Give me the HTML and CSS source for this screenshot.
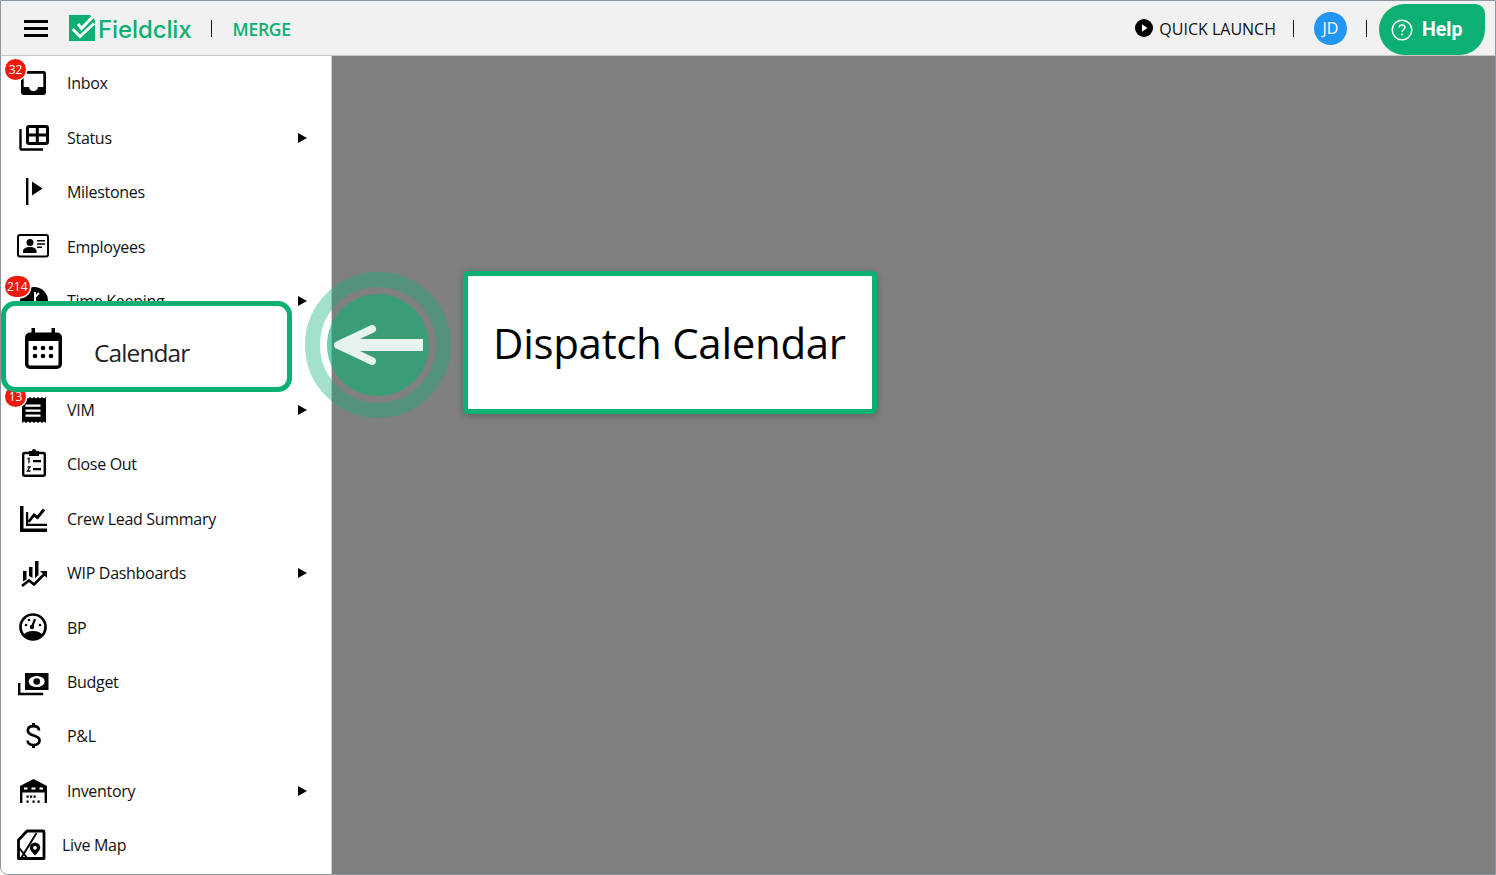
FILE: index.html
```html
<!DOCTYPE html>
<html lang="en">
<head>
<meta charset="utf-8">
<title>Fieldclix</title>
<link rel="stylesheet" href="styles.css">
</head>
<body>
<div class="app">
  <header class="topbar">
    <div class="burger"><span></span><span></span><span></span></div>
    <svg class="logo-mark" viewBox="0 0 26 26"><rect width="26" height="26" fill="#0db073"/><path d="M26 0L21 0 26 5z" fill="#f1f1f1"/><path d="M3.700 14l7.300 7.500L25 8.500" fill="none" stroke="#fff" stroke-width="3"/><path d="M9 9l3.500 4.500L24 1.500" fill="none" stroke="#fff" stroke-width="3"/></svg>
    <span class="brand">Fieldclix</span>
    <span class="sep sep-brand"></span>
    <span class="merge">MERGE</span>
    <div class="spacer"></div>
    <svg class="play" viewBox="0 0 18 18"><circle cx="9" cy="9" r="9" fill="#000"/><path d="M7 5.300L12.400 9 7 12.700z" fill="#fff"/></svg>
    <span class="quick">QUICK LAUNCH</span>
    <span class="sep sep-quick"></span>
    <span class="avatar">JD</span>
    <span class="sep sep-avatar"></span>
    <div class="help">
      <svg class="help-icon" viewBox="0 0 22 22"><circle cx="11" cy="11" r="9.800" fill="none" stroke="#fff" stroke-width="1.500"/><path d="M8.200 8.600c0-1.700 1.300-2.700 2.900-2.700 1.600 0 2.800 1 2.800 2.400 0 2.200-2.800 2.300-2.800 4.500" fill="none" stroke="#fff" stroke-width="1.500"/><circle cx="11.100" cy="15.600" r="1" fill="#fff"/></svg>
      <span>Help</span>
    </div>
  </header>
  <div class="content">
    <nav class="sidebar">
      <div class="nav-item">
        <span class="badge badge-inbox">32</span>
        <svg class="ico" viewBox="0 0 34 34"><path d="M27.500 5H7.500C6 5 5 6.200 5 7.700V26.300C5 27.800 6 29 7.500 29h20c1.500 0 2.500-1.200 2.500-2.700V7.700C30 6.200 29 5 27.500 5zM27.300 21h-5.300c0 2.300-2 4.100-4.500 4.100S13 23.300 13 21H7.700V7.800h19.600V21z"/></svg>
        <span class="label">Inbox</span>
      </div>
      <div class="nav-item">
        <svg class="ico" viewBox="0 0 34 34"><g fill="none" stroke="#000" stroke-width="3"><rect x="11.500" y="5.500" width="20" height="17" rx="1.500"/><path d="M21.300 5.500v17M11.500 14h20"/><path d="M4.500 8v19.500q0 1 1 1H27" stroke-width="2.400"/></g></svg>
        <span class="label">Status</span>
        <span class="caret"></span>
      </div>
      <div class="nav-item">
        <svg class="ico" viewBox="0 0 34 34"><rect x="10" y="3" width="2.400" height="27"/><path d="M16 6.500l10.500 7L16 20.500z"/></svg>
        <span class="label">Milestones</span>
      </div>
      <div class="nav-item">
        <svg class="ico" viewBox="0 0 34 34"><rect x="2" y="5" width="30" height="21.500" rx="2" fill="none" stroke="#000" stroke-width="2"/><circle cx="14" cy="12.500" r="3.500"/><path d="M7 23v-2c0-2.500 3.500-4 7-4s6.500 1.500 6.500 4v2z"/><path d="M21 10h8v1.500h-8zM21 13.300h8v1.500h-8zM21 16.600h5v1.500h-5z"/></svg>
        <span class="label">Employees</span>
      </div>
      <div class="nav-item">
        <span class="badge badge-time">214</span>
        <svg class="ico" viewBox="0 0 34 34"><circle cx="18" cy="17" r="14"/><path d="M19 8v9M19 13l4-4" fill="none" stroke="#fff" stroke-width="2"/></svg>
        <span class="label">Time Keeping</span>
        <span class="caret"></span>
      </div>
      <div class="nav-item"></div>
      <div class="nav-item">
        <span class="badge badge-vim">13</span>
        <svg class="ico" viewBox="0 0 34 34"><path d="M6 4l2 1.500L10 4l2 1.500L14 4l2 1.500L18 4l2 1.500L22 4l2 1.500L26 4l2 1.500L30 4v26l-2-1.500L26 30l-2-1.500L22 30l-2-1.500L18 30l-2-1.500L14 30l-2-1.500L10 30l-2-1.500L6 30z"/><path d="M9.500 11.500h15v2.200h-15zM9.500 16.500h15v2.200h-15zM9.500 21.500h15v2.200h-15z" fill="#fff"/></svg>
        <span class="label">VIM</span>
        <span class="caret"></span>
      </div>
      <div class="nav-item">
        <svg class="ico" viewBox="0 0 34 34"><rect x="7.200" y="6" width="21.600" height="22.800" rx="1.500" fill="none" stroke="#000" stroke-width="2.400"/><path d="M13 4h3a2 2 0 0 1 4 0h3v5H13z"/><path d="M11.500 12l1.500-.8v5M11.500 20h2.500l-2.500 4h3" fill="none" stroke="#000" stroke-width="1.300"/><path d="M17 13h8v2.200h-8zM17 21h8v2.200h-8z"/></svg>
        <span class="label">Close Out</span>
      </div>
      <div class="nav-item">
        <svg class="ico" viewBox="0 0 34 34"><path d="M4 4h3.500v22.500H31V30H4z"/><path d="M10 10h2.200v11.800H31V24H10z"/><path d="M12.500 20l5.500-7 3.500 2.500 6.500-8" fill="none" stroke="#000" stroke-width="2.800"/></svg>
        <span class="label">Crew Lead Summary</span>
      </div>
      <div class="nav-item">
        <svg class="ico" viewBox="0 0 34 34"><path d="M7 15h3.500v8.500l-3.500 2zM13 11h3.500v11L13 20zM19 5h3.500v14L19 22z"/><path d="M6 30l7-5.500 5 4 10.500-10.500" fill="none" stroke="#000" stroke-width="2.600"/><path d="M24 15h7v7z"/></svg>
        <span class="label">WIP Dashboards</span>
        <span class="caret"></span>
      </div>
      <div class="nav-item">
        <svg class="ico" viewBox="0 0 34 34"><circle cx="17" cy="16" r="12.500" fill="none" stroke="#000" stroke-width="2.700"/><path d="M7.500 24c1.500-2.500 5-4 9.500-4s8 1.500 9.500 4c-2.500 2.500-6 4-9.500 4s-7-1.500-9.500-4z"/><path d="M16 16l3-8" stroke="#000" stroke-width="2.200"/><circle cx="16" cy="16" r="2.200"/><circle cx="10" cy="14" r="1.300"/><circle cx="13" cy="9" r="1.300"/><circle cx="24" cy="14" r="1.300"/></svg>
        <span class="label">BP</span>
      </div>
      <div class="nav-item">
        <svg class="ico" viewBox="0 0 34 34"><rect x="9" y="8" width="23.500" height="17"/><ellipse cx="20.700" cy="16.500" rx="8" ry="5.500" fill="#fff"/><circle cx="20.700" cy="16.500" r="3.300"/><path d="M3.200 18v11h24" fill="none" stroke="#000" stroke-width="2.400"/></svg>
        <span class="label">Budget</span>
      </div>
      <div class="nav-item">
        <svg class="ico" viewBox="0 0 34 34"><path d="M23 11.500c0-3-2.500-4.300-5.500-4.300s-5.700 1.300-5.700 4.300c0 6.500 11.800 3.500 11.800 10 0 3-2.800 4.500-6 4.500s-6-1.500-6-4.500" fill="none" stroke="#000" stroke-width="2.700"/><path d="M16 4h3v4h-3zM16 25h3v4h-3z"/></svg>
        <span class="label">P&amp;L</span>
      </div>
      <div class="nav-item">
        <svg class="ico" viewBox="0 0 34 34"><path d="M4 29V12l13.500-7L31 12v17h-2.400V18.500H6.400V29z"/><path d="M8 13.500h3.500v2H8zM15.500 13.500h4v2h-4zM23.500 13.500h3.500v2h-3.500z" fill="#fff"/><path d="M10.500 21.500h2.200v2.200h-2.200zM14 21.500h2.200v2.200H14zM17.500 21.500h2.200v2.200h-2.200zM10.500 26.500h2.200v2.200h-2.200zM16.500 26.500h2.200v2.200h-2.200zM21.500 26.500h2.200v2.200h-2.200z"/></svg>
        <span class="label">Inventory</span>
        <span class="caret"></span>
      </div>
      <div class="nav-item nav-item-map">
        <svg class="ico" viewBox="0 0 34 34"><path d="M11 3h16a1 1 0 0 1 1 1v26.500H2.500V12z" fill="none" stroke="#000" stroke-width="2.800" stroke-linejoin="round"/><path d="M5.500 29.500L20.500 5M2 18.500l8.700 11" fill="none" stroke="#000" stroke-width="2"/><path d="M19 14.500a5.300 5.300 0 0 1 5.300 5.300c0 2.700-5.300 7.700-5.300 7.700s-5.300-5-5.300-7.700A5.300 5.300 0 0 1 19 14.500z"/><circle cx="19" cy="19.800" r="1.900" fill="#fff"/></svg>
        <span class="label">Live Map</span>
      </div>
    </nav>
    <main class="main"></main>
  </div>

  <div class="highlight">
    <svg class="highlight-icon" viewBox="0 0 37 42"><path d="M6.500 0h3.500v6H6.500zM26.500 0H30v6h-3.500z"/><path d="M5 4.500h27a5 5 0 0 1 5 5V36a5 5 0 0 1-5 5H5a5 5 0 0 1-5-5V9.500a5 5 0 0 1 5-5zM3.500 13v23A1.500 1.500 0 0 0 5 37.500h27a1.500 1.500 0 0 0 1.500-1.500V13z"/><circle cx="10" cy="20" r="2.300"/><circle cx="18" cy="20" r="2.300"/><circle cx="26" cy="20" r="2.300"/><circle cx="10" cy="28" r="2.300"/><circle cx="18" cy="28" r="2.300"/><circle cx="26" cy="28" r="2.300"/></svg>
    <span class="highlight-label">Calendar</span>
  </div>

  <div class="pulse">
    <div class="pulse-core"></div>
    <svg class="pulse-arrow" viewBox="0 0 92 40"><path d="M10 20H90" stroke="#e6f3ee" stroke-width="12" fill="none"/><path d="M39 4L5 20l34 16" stroke="#e6f3ee" stroke-width="8" stroke-linecap="round" stroke-linejoin="round" fill="none"/></svg>
  </div>

  <div class="callout">Dispatch Calendar</div>
</div>
</body>
</html>
```

FILE: styles.css
```css
* { box-sizing: border-box; }
html, body { margin: 0; padding: 0; background: #fff; }
body { font-family: "Open Sans", "Noto Sans", sans-serif; color: #111; }

.app {
  position: relative;
  width: 1496px;
  height: 875px;
  border: 1px solid #8d959d;
  border-radius: 0 0 0 8px;
  overflow: hidden;
  display: flex;
  flex-direction: column;
}

.topbar {
  flex: none;
  height: 55px;
  background: #f1f1f1;
  border-bottom: 1px solid #c8c8c8;
  display: flex;
  align-items: center;
  padding-left: 23px;
}
.burger { width: 24px; display: flex; flex-direction: column; gap: 4px; margin-right: 21px; }
.burger span { display: block; height: 3px; background: #000; }
.logo-mark { width: 26px; height: 26px; flex: none; margin-right: 3px; }
.brand { font-family: Inter, Roboto, sans-serif; font-weight: 500; font-size: 24px; color: #0db073; margin-top: 2px; letter-spacing: -.1px; }
.sep { flex: none; width: 1px; height: 17px; background: #111; }
.sep-brand { margin-left: 19px; margin-right: 21px; }
.merge { font-size: 17.500px; font-weight: 600; color: #0db073; letter-spacing: -.3px; margin-top: 2px; }
.spacer { flex: 1; }
.play { width: 18px; height: 18px; flex: none; margin-right: 6px; }
.quick { font-size: 16px; color: #111; margin-top: 2px; }
.sep-quick { margin-left: 17px; margin-right: 20px; }
.avatar {
  width: 33px; height: 33px; flex: none;
  border-radius: 50%;
  background: #2196f3;
  color: #fff;
  font-size: 16px;
  display: flex; align-items: center; justify-content: center;
}
.sep-avatar { margin-left: 19px; margin-right: 12px; }
.help {
  flex: none;
  width: 106px; height: 51px;
  margin-right: 10px;
  margin-top: 3px;
  background: #0db073;
  border-radius: 26px 10px 26px 26px;
  display: flex; align-items: center;
  padding-left: 12px; gap: 9px;
  color: #fff;
  font-family: Roboto, sans-serif;
  font-weight: 700;
  font-size: 19.500px;
}
.help span { margin-top: -1px; }
.help-icon { width: 22px; height: 22px; }

.content { flex: 1; display: flex; min-height: 0; }
.sidebar {
  flex: none;
  width: 331px;
  padding-top: .2px;
  background: #fff;
  border-right: 1px solid #d0d0d0;
  display: grid;
  grid-auto-rows: 54.430px;
  align-content: start;
}
.main { flex: 1; background: #808080; }

.nav-item {
  position: relative;
  display: flex;
  align-items: center;
  padding-left: 15px;
  padding-right: 24px;
  font-size: 16px;
}
.ico { width: 34px; height: 34px; flex: none; margin-right: 17px; }
.label { flex: 1; letter-spacing: -.3px; }
.nav-item-map .label { margin-left: -5px; }
.caret {
  flex: none;
  width: 0; height: 0;
  border-left: 9px solid #000;
  border-top: 5.500px solid transparent;
  border-bottom: 5.500px solid transparent;
}

.badge {
  position: absolute;
  z-index: 1;
  height: 21px;
  min-width: 21px;
  padding: 0 2px;
  border-radius: 11px;
  background: #f01a0a;
  color: #fff;
  font-size: 12px;
  line-height: 21px;
  text-align: center;
  box-shadow: 0 0 0 1.500px #fff;
}
.badge-inbox { left: 4px; top: 3px; }
.badge-time { left: 4px; top: 2px; }
.badge-vim { left: 4px; top: 3px; }

.highlight {
  position: absolute;
  left: 0; top: 300px;
  width: 291px; height: 91px;
  background: #fff;
  border: 5px solid #0db073;
  border-radius: 14px;
  display: flex;
  align-items: center;
  padding-left: 19px;
  z-index: 2;
}
.highlight-icon { width: 37px; height: 42px; flex: none; margin-right: 32px; margin-top: 4px; }
.highlight-label { font-size: 24.500px; color: #222; letter-spacing: -.9px; margin-top: 11px; }

.pulse {
  position: absolute;
  left: 304px; top: 271px;
  width: 146px; height: 146px;
  border-radius: 50%;
  border: 15px solid rgba(13,176,115,.38);
  z-index: 2;
}
.pulse-core {
  position: absolute;
  left: 7px; top: 7px;
  width: 102px; height: 102px;
  border-radius: 50%;
  background: rgba(13,176,115,.6);
}
.pulse-arrow {
  position: absolute;
  left: 13px; top: 38px;
  width: 92px; height: 40px;
}

.callout {
  position: absolute;
  left: 462px; top: 270px;
  width: 414px; height: 143px;
  background: #fff;
  border: 5px solid #0db073;
  border-radius: 5px;
  box-shadow: 0 2px 8px rgba(0,0,0,.25);
  display: flex; align-items: center;
  padding-left: 25px;
  font-size: 42px;
  letter-spacing: -.3px;
  color: #000;
  z-index: 2;
}
```
